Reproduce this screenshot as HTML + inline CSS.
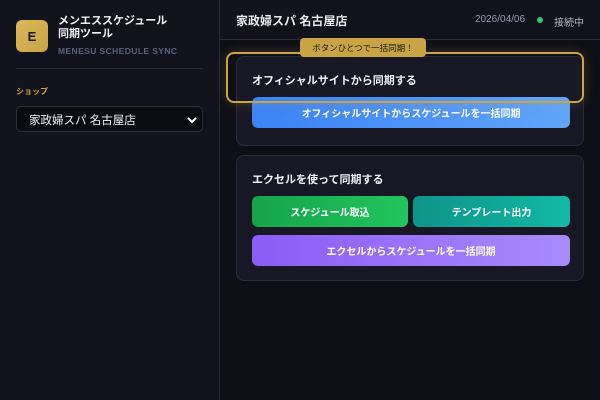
<!DOCTYPE html>
<html><head><meta charset="utf-8"><style>
*{margin:0;padding:0;box-sizing:border-box}
body{width:600px;height:400px;background:#0e0e16;font-family:"Liberation Sans","Noto Sans CJK JP",sans-serif;color:#e8e8f0;position:relative;overflow:hidden}
.side{position:absolute;left:0;top:0;width:220px;height:400px;background:#12121c;border-right:1px solid #2a2a3a}
.logo{position:absolute;left:16px;top:20px;width:32px;height:32px;border-radius:6px;background:linear-gradient(135deg,#d9b85a,#c9a445);color:#1a1a1a;font-weight:bold;font-size:13px;display:flex;align-items:center;justify-content:center}
.t1{position:absolute;left:58px;top:15px;font-size:11px;font-weight:bold;line-height:13px;color:#f0f0f5}
.t2{position:absolute;left:58px;top:46px;font-size:8.5px;font-weight:bold;color:#5c5f7a;letter-spacing:.4px}
.div{position:absolute;left:16px;top:68px;width:187px;height:1px;background:#2c2c3c}
.lbl{position:absolute;left:16px;top:86px;font-size:8px;color:#c9a445;font-weight:bold}
.sel{position:absolute;left:16px;top:106px;width:187px;height:26px;border:1px solid #2c2c3c;border-radius:5px;background:#0b0b12;font-size:11.5px;padding:5px 0 0 12px;color:#f0f0f5}
.sel svg{position:absolute;right:5px;top:9px}
.hdr{position:absolute;left:220px;top:0;width:380px;height:40px;border-bottom:1px solid #2a2a3a;background:#12121c}
.ht{position:absolute;left:16px;top:12px;font-size:12px;font-weight:bold}
.date{position:absolute;left:255px;top:14px;font-size:10px;color:#9a9ab0}
.dot{position:absolute;left:317px;top:17px;width:6px;height:6px;border-radius:50%;background:#2ecc71}
.con{position:absolute;left:334px;top:14px;font-size:10px;color:#b0b0c0}
.card{position:absolute;left:236px;width:348px;border:1px solid #2a2a3a;border-radius:8px;background:#181824}
.ct{position:absolute;left:15px;font-size:11px;font-weight:bold;color:#f0f0f5}
.btn{position:absolute;height:31px;border-radius:6px;color:#fff;font-size:10px;font-weight:bold;display:flex;align-items:center;justify-content:center}
.hl{position:absolute;left:226px;top:52px;width:358px;height:51px;border:2px solid #c9a445;border-radius:8px;box-shadow:0 0 12px rgba(201,164,69,.25)}
.badge{position:absolute;left:300px;top:38px;width:126px;height:19px;background:#c9a445;border-radius:4px;color:#1a1a1a;font-size:8.5px;display:flex;align-items:center;justify-content:center}
</style></head><body>
<div class="side">
<div class="logo">E</div>
<div class="t1">メンエススケジュール<br>同期ツール</div>
<div class="t2">MENESU SCHEDULE SYNC</div>
<div class="div"></div>
<div class="lbl">ショップ</div>
<div class="sel">家政婦スパ 名古屋店<svg width="10" height="8" viewBox="0 0 10 8"><path d="M1 2l4 4 4-4" stroke="#fff" stroke-width="2" fill="none"/></svg></div>
</div>
<div class="hdr"><div class="ht">家政婦スパ 名古屋店</div><div class="date">2026/04/06</div><div class="dot"></div><div class="con">接続中</div></div>
<div class="card" style="top:56px;height:90px">
<div class="ct" style="top:15px">オフィシャルサイトから同期する</div>
<div class="btn" style="left:15px;top:40px;width:318px;background:linear-gradient(90deg,#3b82f6,#60a5fa)">オフィシャルサイトからスケジュールを一括同期</div>
</div>
<div class="hl"></div>
<div class="badge">ボタンひとつで一括同期！</div>
<div class="card" style="top:155px;height:126px">
<div class="ct" style="top:15px">エクセルを使って同期する</div>
<div class="btn" style="left:15px;top:40px;width:156px;background:linear-gradient(90deg,#16a34a,#22c55e)">スケジュール取込</div>
<div class="btn" style="left:176px;top:40px;width:157px;background:linear-gradient(90deg,#0d9488,#14b8a6)">テンプレート出力</div>
<div class="btn" style="left:15px;top:79px;width:318px;background:linear-gradient(90deg,#8b5cf6,#a78bfa)">エクセルからスケジュールを一括同期</div>
</div>
</body></html>
